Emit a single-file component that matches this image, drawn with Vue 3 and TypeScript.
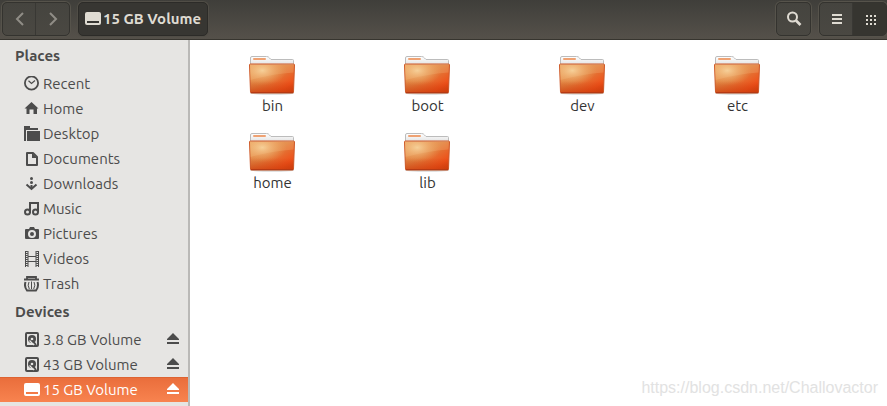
<script setup lang="ts">
import { ref } from 'vue'

interface Place {
  name: string
  icon: string
}

const places: Place[] = [
  { name: 'Recent', icon: 'recent' },
  { name: 'Home', icon: 'home' },
  { name: 'Desktop', icon: 'desktop' },
  { name: 'Documents', icon: 'documents' },
  { name: 'Downloads', icon: 'downloads' },
  { name: 'Music', icon: 'music' },
  { name: 'Pictures', icon: 'pictures' },
  { name: 'Videos', icon: 'videos' },
  { name: 'Trash', icon: 'trash' },
]

const devices: Place[] = [
  { name: '3.8 GB Volume', icon: 'disk' },
  { name: '43 GB Volume', icon: 'disk' },
  { name: '15 GB Volume', icon: 'drive' },
]

const folders: string[] = ['bin', 'boot', 'dev', 'etc', 'home', 'lib']

const current = ref('15 GB Volume')
const view = ref<'list' | 'grid'>('grid')
</script>

<template>
  <svg class="sprite" aria-hidden="true">
    <defs>
      <linearGradient id="folder-front" x1="0" y1="0" x2="1" y2="1">
        <stop offset="0" stop-color="#e9a05c" />
        <stop offset="0.45" stop-color="#e07f3e" />
        <stop offset="0.8" stop-color="#ee5019" />
        <stop offset="1" stop-color="#d03c0c" />
      </linearGradient>
      <radialGradient id="folder-glow" cx="0.28" cy="0.22" r="0.55">
        <stop offset="0" stop-color="#f8d9a4" stop-opacity="0.85" />
        <stop offset="1" stop-color="#f0a860" stop-opacity="0" />
      </radialGradient>
      <linearGradient id="folder-shade" x1="0" y1="0" x2="0" y2="1">
        <stop offset="0.6" stop-color="#c83c0c" stop-opacity="0" />
        <stop offset="1" stop-color="#c83c0c" stop-opacity="0.6" />
      </linearGradient>
      <linearGradient id="folder-back" x1="0" y1="0" x2="0" y2="1">
        <stop offset="0" stop-color="#ffffff" />
        <stop offset="0.25" stop-color="#e0e0e0" />
      </linearGradient>
    </defs>
    <symbol id="recent" viewBox="0 0 16 16">
      <circle cx="7.5" cy="7" r="6.6" fill="none" stroke="currentColor" stroke-width="1.8" />
      <path d="M4.5 4.7 7.5 7.500 11 4.500" fill="none" stroke="currentColor" stroke-width="1.2" />
    </symbol>
    <symbol id="home" viewBox="0 0 16 16">
      <path d="M7.500 1 14.500 7.500H13V13H9.500V8.500h-4V13H2.500V7.500H.5z" fill="currentColor" />
    </symbol>
    <symbol id="desktop" viewBox="0 0 16 16">
      <path d="M0 0h6v2h8v2H2v11H0z M3 5h13v10H3z" fill="currentColor" />
    </symbol>
    <symbol id="documents" viewBox="0 0 16 16">
      <path d="M3 2h6l4 4v8H3z" fill="none" stroke="currentColor" stroke-width="2" stroke-linejoin="round" />
      <path d="M8 2v5h5z" fill="currentColor" />
    </symbol>
    <symbol id="downloads" viewBox="0 0 16 16">
      <circle cx="7.500" cy="2.500" r="1.500" fill="currentColor" />
      <circle cx="7.500" cy="6.500" r="1.500" fill="currentColor" />
      <path d="M7.500 9v3M2.500 8.500l5 4.500 5-4.500" fill="none" stroke="currentColor" stroke-width="2" />
    </symbol>
    <symbol id="music" viewBox="0 0 16 16">
      <path d="M6 12V2h8v9" fill="none" stroke="currentColor" stroke-width="2" />
      <circle cx="3.500" cy="11" r="2.500" fill="none" stroke="currentColor" stroke-width="2" />
      <circle cx="11.500" cy="11" r="2.500" fill="none" stroke="currentColor" stroke-width="2" />
    </symbol>
    <symbol id="pictures" viewBox="0 0 16 16">
      <path fill-rule="evenodd" d="M2 3h3l1-2h4l1 2h3q1 0 1 1v8q0 1-1 1H2q-1 0-1-1V4q0-1 1-1zM8 4a4 4 0 1 0 0 8 4 4 0 0 0 0-8zM8 6a2 2 0 1 1 0 4 2 2 0 0 1 0-4z" fill="currentColor" />
    </symbol>
    <symbol id="videos" viewBox="0 0 16 16">
      <path d="M1.500 0v16M4 0v16M12 0v16M14.500 0v16M4 5.500h8M4 10.500h8" fill="none" stroke="currentColor" />
      <path d="M2.800 0v16M13.200 0v16" fill="none" stroke="currentColor" stroke-width="2" stroke-dasharray="1 1" />
    </symbol>
    <symbol id="trash" viewBox="0 0 16 16">
      <path d="M3 2.500V1h9v1.500M0 3.500h15" fill="none" stroke="currentColor" stroke-width="1.800" />
      <path d="M1.500 6C.5 9 1 12 3 14.500h9C14 12 14.500 9 13.500 6" fill="none" stroke="currentColor" stroke-width="2" />
      <path d="M5 6q-1.800 3 .3 7M7.500 5.500v7.500M10 6q1.800 3-.3 7" fill="none" stroke="currentColor" />
    </symbol>
    <symbol id="disk" viewBox="0 0 16 16">
      <rect x="2" y="1" width="12" height="13" rx="1" fill="none" stroke="currentColor" stroke-width="2" />
      <circle cx="8" cy="7" r="4" fill="currentColor" />
      <circle cx="8" cy="7" r="1.300" fill="#e6e5e3" />
      <path d="M5.500 8.500 10 13" stroke="#e6e5e3" stroke-width="1.200" />
      <path d="M8.500 8.500 12 13" stroke="currentColor" stroke-width="2" />
    </symbol>
    <symbol id="drive" viewBox="0 0 16 16">
      <path fill-rule="evenodd" d="M2 1h12q2 0 2 2v9q0 2-2 2H2q-2 0-2-2V3q0-2 2-2zM2 10v2h12v-2z" fill="currentColor" />
    </symbol>
    <symbol id="eject" viewBox="0 0 16 16">
      <path d="M8 1l6 6v1H2V7zM2 10h12v2H2z" fill="currentColor" />
    </symbol>
    <symbol id="folder" viewBox="1 0 47 39">
      <ellipse cx="24" cy="37.500" rx="22" ry="1" fill="#888" opacity=".5" />
      <path d="M2.500 36V2q0-1.500 1.500-1.500h14.500q2 0 3 1.500l1.500 1.500h21.500q1 0 1 1V36z" fill="url(#folder-back)" stroke="#bcbcbc" />
      <rect x="5" y="2" width="13" height="2" rx="1" fill="#efa273" />
      <path d="M1.500 9q0-1 1-1h43q1 0 1 1L45.500 36q0 1-1 1h-41q-1 0-1-1z" fill="url(#folder-front)" stroke="#ce5a2a" />
      <path d="M2 8.500h44l-.500 8Q24 18 2.500 24z" fill="#ffe0a8" opacity=".18" />
      <path d="M2 8.500h44L45 36H3z" fill="url(#folder-glow)" />
      <path d="M2 8.500h44L45 36H3z" fill="url(#folder-shade)" />
      <path d="M2.500 8.500h43" stroke="#dc8656" />
      <path d="M3 36.500h42" stroke="#b53a14" />
    </symbol>
  </svg>

  <div class="window">
    <header class="toolbar">
      <div class="group">
        <button class="tool" type="button" aria-label="Back">
          <svg class="icon dim" viewBox="0 0 16 16"><path d="M11 2 5 8l6 6" fill="none" stroke="currentColor" stroke-width="2" /></svg>
        </button>
        <button class="tool" type="button" aria-label="Forward">
          <svg class="icon dim" viewBox="0 0 16 16"><path d="M5 2l6 6-6 6" fill="none" stroke="currentColor" stroke-width="2" /></svg>
        </button>
      </div>
      <button class="path" type="button">
        <svg class="icon"><use href="#drive" /></svg>
        <span>{{ current }}</span>
      </button>
      <div class="group search">
        <button class="tool" type="button" aria-label="Search">
          <svg class="icon" viewBox="0 0 16 16">
            <circle cx="6.500" cy="6" r="4.500" fill="none" stroke="currentColor" stroke-width="2" />
            <path d="M10 9.500 14.500 14" stroke="currentColor" stroke-width="2.600" />
          </svg>
        </button>
      </div>
      <div class="group">
        <button class="tool" :class="{ pressed: view === 'list' }" type="button" aria-label="List view" @click="view = 'list'">
          <svg class="icon" viewBox="0 0 16 16"><path d="M3 3h10v2H3zM3 7h10v2H3zM3 11h10v2H3z" fill="currentColor" /></svg>
        </button>
        <button class="tool" :class="{ pressed: view === 'grid' }" type="button" aria-label="Icon view" @click="view = 'grid'">
          <svg class="icon" viewBox="0 0 16 16">
            <path d="M4 4h2v2H4zM8 4h2v2H8zM12 4h2v2h-2zM4 8h2v2H4zM8 8h2v2H8zM12 8h2v2h-2zM4 12h2v2H4zM8 12h2v2H8zM12 12h2v2h-2z" fill="currentColor" />
          </svg>
        </button>
      </div>
    </header>

    <div class="body">
      <nav class="sidebar" aria-label="Places and devices">
        <h2 class="heading">Places</h2>
        <ul class="list">
          <li v-for="place in places" :key="place.name" class="row">
            <a class="link" href="#">
              <svg class="icon"><use :href="'#' + place.icon" /></svg>
              <span>{{ place.name }}</span>
            </a>
          </li>
        </ul>
        <h2 class="heading">Devices</h2>
        <ul class="list">
          <li v-for="device in devices" :key="device.name" class="row" :class="{ selected: device.name === current }">
            <a class="link" href="#" @click.prevent="current = device.name">
              <svg class="icon"><use :href="'#' + device.icon" /></svg>
              <span>{{ device.name }}</span>
            </a>
            <button class="eject" type="button" :aria-label="'Eject ' + device.name">
              <svg class="icon"><use href="#eject" /></svg>
            </button>
          </li>
        </ul>
      </nav>

      <main class="files">
        <a v-for="folder in folders" :key="folder" class="file" href="#">
          <svg class="folder"><use href="#folder" /></svg>
          <span>{{ folder }}</span>
        </a>
      </main>
    </div>
    <div class="watermark">https://blog.csdn.net/Challovactor</div>
  </div>
</template>

<style>
body {
  margin: 0;
}
</style>

<style scoped>
.window {
  position: relative;
  display: flex;
  flex-direction: column;
  min-height: 100vh;
  overflow: hidden;
  background: #fff;
  color: #4c4c4c;
  font: 15px/20px Ubuntu, "Noto Sans", "Open Sans", sans-serif;
}

.sprite {
  position: absolute;
  width: 0;
  height: 0;
}

button {
  margin: 0;
  padding: 0;
  border: 0;
  background: none;
  color: inherit;
  font: inherit;
}

a {
  color: inherit;
  text-decoration: none;
}

.icon {
  display: block;
  flex: none;
  width: 16px;
  height: 16px;
}

.toolbar {
  display: flex;
  align-items: center;
  gap: 8px;
  box-sizing: border-box;
  height: 40px;
  padding: 0 0 1px 2px;
  border-bottom: 1px solid #37352f;
  background: linear-gradient(#3f3e3a, #55514a);
  color: #dfdbd2;
}

.group {
  display: flex;
  box-sizing: border-box;
  height: 34px;
  border: 1px solid #34332f;
  border-radius: 5px;
  box-shadow: 0 0 0 1px #56534b;
  background: linear-gradient(#45443f, #4a4842);
  overflow: hidden;
}

.tool {
  display: grid;
  place-items: center;
  width: 33px;
}

.tool + .tool {
  box-shadow: -1px 0 #393834;
}

.tool.pressed {
  background: #363530;
}

.dim {
  color: #908d86;
}

.path {
  display: flex;
  align-items: center;
  gap: 2px;
  box-sizing: border-box;
  height: 34px;
  padding: 0 6px;
  border: 1px solid #2c2b28;
  border-radius: 5px;
  box-shadow: 0 0 0 1px #504d46;
  background: #373632;
  font-weight: 700;
}

.search {
  margin-left: auto;
}

.body {
  display: flex;
  flex: 1;
}

.sidebar {
  flex: none;
  box-sizing: border-box;
  width: 190px;
  border-right: 2px solid #bab9b7;
  background: #e6e5e3;
}

.heading {
  margin: 0;
  padding: 6px 15px 5px;
  font-size: 15px;
  line-height: 20px;
  font-weight: 700;
}

.list {
  margin: 0;
  padding: 0;
  list-style: none;
}

.row {
  display: flex;
  align-items: center;
  height: 25px;
  padding: 0 7px 0 24px;
}

.link {
  display: flex;
  flex: 1;
  align-items: center;
  gap: 3px;
}

.selected {
  background: linear-gradient(#e96d3b, #f8834f);
  box-shadow: inset 0 1px #dd6332;
  color: #fff;
}

.files {
  display: grid;
  flex: 1;
  grid-template-columns: repeat(auto-fill, 155px);
  grid-auto-rows: 77px;
  align-content: start;
  padding: 16px 0 0 5px;
  color: #333;
}

.file {
  display: flex;
  flex-direction: column;
  align-items: center;
  gap: 1px;
}

.folder {
  width: 47px;
  height: 39px;
}

.watermark {
  position: absolute;
  right: 9px;
  bottom: 8px;
  color: #e2e2e2;
  font: 16px/20px "Liberation Sans", sans-serif;
}
</style>
